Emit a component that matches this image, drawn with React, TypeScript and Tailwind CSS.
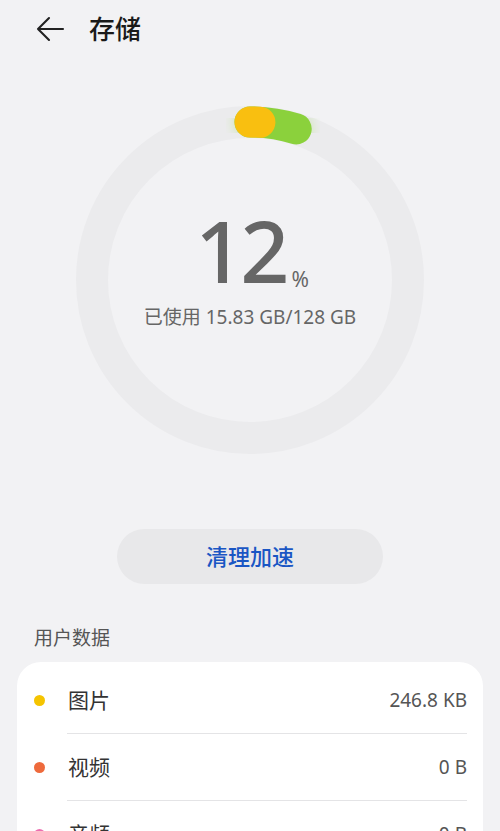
import React from 'react'

const items = [
  { name: '图片', size: '246.8 KB', color: 'bg-[#f5c400]' },
  { name: '视频', size: '0 B', color: 'bg-[#ee6a3c]' },
  { name: '音频', size: '0 B', color: 'bg-[#ec6fb0]' },
]

function Ring() {
  // ring centre 175,175 ; radius 158 ; stroke 32
  const r = 158
  const pt = (deg: number) => {
    const a = (deg * Math.PI) / 180
    return `${175 + r * Math.sin(a)} ${175 - r * Math.cos(a)}`
  }
  const arc = (from: number, to: number) => `M ${pt(from)} A ${r} ${r} 0 0 1 ${pt(to)}`
  return (
    <svg width="350" height="350" viewBox="0 0 350 350" className="absolute inset-0">
      <defs>
        <filter id="glow" x="-50%" y="-50%" width="200%" height="200%">
          <feGaussianBlur stdDeviation="6" />
        </filter>
      </defs>
      <circle cx="175" cy="175" r={r} fill="none" stroke="#ebebed" strokeWidth="32" />
      <path d={arc(0, 17)} fill="none" stroke="#b8e38a" strokeOpacity="0.5" strokeWidth="34" strokeLinecap="round" filter="url(#glow)" />
      <path d={arc(0, 17)} fill="none" stroke="#8bd13c" strokeWidth="31" strokeLinecap="round" />
      <path d={arc(0, 3.6)} fill="none" stroke="#f9bf10" strokeWidth="31" strokeLinecap="round" />
    </svg>
  )
}

export default function App() {
  return (
    <div className="min-h-[831px] h-[831px] overflow-hidden bg-[#f2f2f4] text-[#1a1a1a]" style={{ fontFamily: '"Noto Sans", "Noto Sans CJK SC", sans-serif' }}>
      {/* header */}
      <header className="h-[58px] flex items-center">
        <svg width="30" height="28" viewBox="0 0 30 28" className="ml-[35px]" fill="none" stroke="#222" strokeWidth="2.1" strokeLinecap="round" strokeLinejoin="round">
          <path d="M28 14 H3 M14 3 L3 14 L14 25" />
        </svg>
        <h1 className="ml-[24px] text-[26px] font-medium leading-none">存储</h1>
      </header>

      {/* usage ring */}
      <div className="relative mx-auto mt-[47px] w-[350px] h-[350px]">
        <Ring />
        <div className="absolute inset-0 flex flex-col items-center pt-[102px] text-[#666]">
          <div className="flex items-baseline ml-[4px]">
            <span className="text-[86px] leading-none font-medium tracking-[-4px]">12</span>
            <span className="text-[21px] leading-none ml-[6px] translate-y-[4px]">%</span>
          </div>
          <div className="mt-[12px] text-[19px] leading-[24px]">已使用 15.83 GB/128 GB</div>
        </div>
      </div>

      {/* clean button */}
      <div className="flex justify-center mt-[74px]">
        <button className="w-[266px] h-[55px] rounded-full bg-[#e8e8ea] text-[#1a56c4] text-[22px] font-medium">
          清理加速
        </button>
      </div>

      {/* user data */}
      <div className="mt-[42px] px-[34px] text-[19px] leading-[24px] text-[#555]">用户数据</div>
      <div className="mx-[17px] mt-[12px] bg-white rounded-[24px] pt-[5px]">
        {items.map((it, i) => (
          <div key={it.name} className="flex items-center h-[67px] relative">
            <span className={`ml-[17px] w-[11px] h-[11px] rounded-full ${it.color}`} />
            <span className="ml-[23px] text-[21px] text-[#333]">{it.name}</span>
            <span className="ml-auto mr-[16px] text-[19px] text-[#555]">{it.size}</span>
            {i < items.length - 1 && <div className="absolute left-[50px] right-[16px] bottom-0 h-px bg-[#e4e4e6]" />}
          </div>
        ))}
      </div>
    </div>
  )
}
